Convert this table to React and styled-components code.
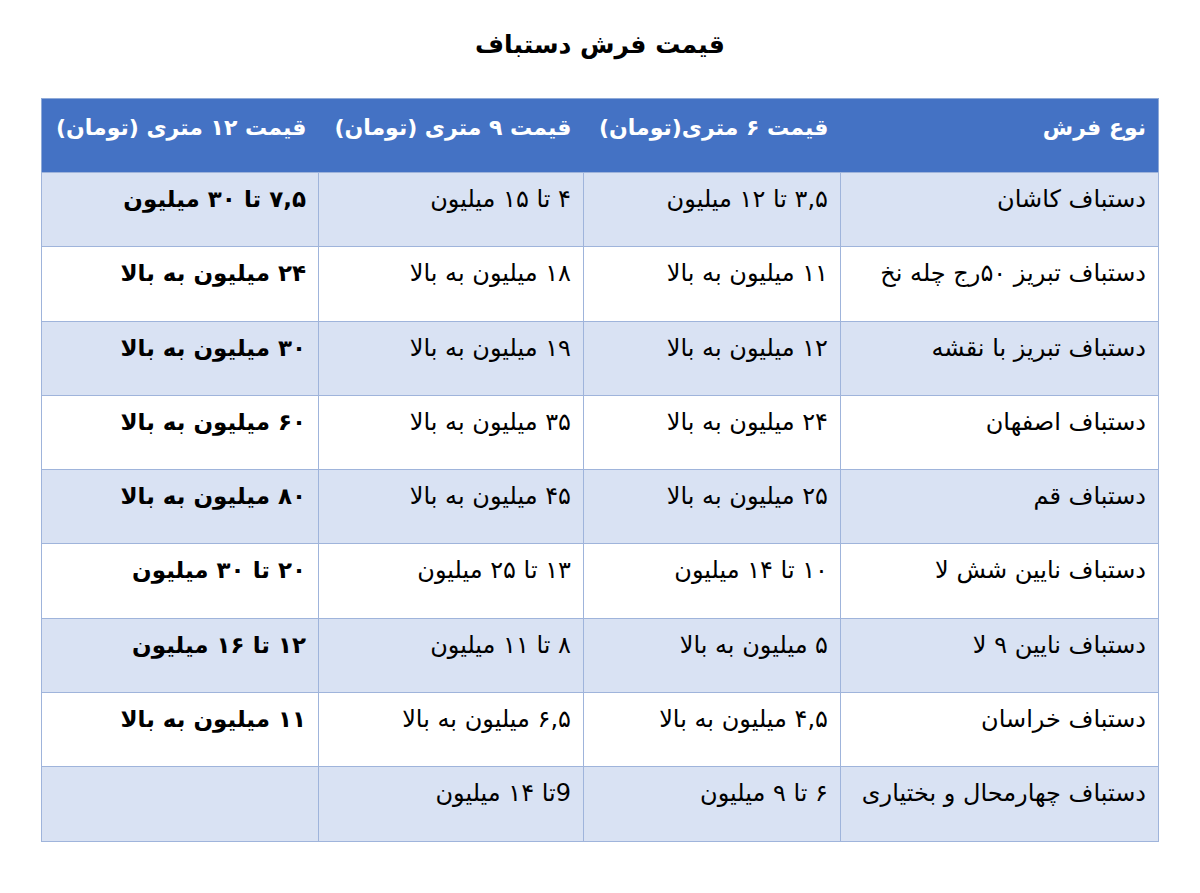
import React from "react";
import styled, { createGlobalStyle } from "styled-components";

const GlobalStyle = createGlobalStyle`
  html, body {
    margin: 0;
    padding: 0;
    background: #ffffff;
  }
  body {
    font-family: "DejaVu Sans", "Noto Sans", sans-serif;
    color: #000;
  }
`;

const Page = styled.div`
  width: 1200px;
  min-height: 893px;
  display: flex;
  flex-direction: column;
  align-items: center;
  padding-top: 28px;
  box-sizing: border-box;
  direction: rtl;
`;

const Title = styled.h1`
  margin: 0 0 36px;
  font-size: 25px;
  font-weight: bold;
  line-height: 34px;
`;

const Table = styled.table`
  width: 1117px;
  table-layout: fixed;
  border-collapse: collapse;
  border: 1px solid #8faad8;
`;

const Col = styled.col`
  width: ${(p) => p.$w}px;
`;

const HeadCell = styled.th`
  height: 74px;
  background: #4472c4;
  color: #ffffff;
  font-size: 22px;
  font-weight: bold;
  line-height: 28px;
  text-align: right;
  vertical-align: top;
  padding: 15px 12px 0;
  box-sizing: border-box;
  white-space: nowrap;
`;

const Row = styled.tr`
  background: ${(p) => (p.$shaded ? "#d9e2f3" : "#ffffff")};
`;

const Cell = styled.td`
  height: 74.3px;
  border: 1.5px solid #9fb4db;
  font-size: ${(p) => (p.$bold ? "23px" : "24px")};
  font-weight: ${(p) => (p.$bold ? "bold" : "normal")};
  line-height: 28px;
  text-align: right;
  vertical-align: top;
  padding: 12px 12px 0;
  box-sizing: border-box;
  white-space: nowrap;
`;

const widths = [318, 257, 265, 277];

const headers = [
  "نوع فرش",
  "قیمت ۶ متری(تومان)",
  "قیمت ۹ متری (تومان)",
  "قیمت ۱۲ متری (تومان)",
];

const rows = [
  ["دستباف کاشان", "۳,۵ تا ۱۲ میلیون", "۴  تا ۱۵ میلیون", "۷,۵ تا ۳۰ میلیون"],
  ["دستباف تبریز ۵۰رج چله نخ", "۱۱  میلیون به بالا", "۱۸ میلیون به بالا", "۲۴ میلیون به بالا"],
  ["دستباف تبریز با نقشه", "۱۲  میلیون به بالا", "۱۹ میلیون به بالا", "۳۰ میلیون به بالا"],
  ["دستباف اصفهان", "۲۴  میلیون به بالا", "۳۵  میلیون به بالا", "۶۰ میلیون به بالا"],
  ["دستباف قم", "۲۵ میلیون به بالا", "۴۵  میلیون به بالا", "۸۰ میلیون به بالا"],
  ["دستباف نایین شش لا", "۱۰ تا ۱۴ میلیون", "۱۳ تا ۲۵ میلیون", "۲۰ تا ۳۰ میلیون"],
  ["دستباف نایین ۹ لا", "۵ میلیون به بالا", "۸ تا ۱۱ میلیون", "۱۲ تا ۱۶ میلیون"],
  ["دستباف خراسان", "۴,۵ میلیون به بالا", "۶,۵ میلیون به بالا", "۱۱ میلیون به بالا"],
  ["دستباف چهارمحال و بختیاری", "۶ تا ۹ میلیون", "9تا ۱۴ میلیون", ""],
];

const App = () => {
  return (
    <>
      <GlobalStyle />
      <Page>
        <Title>قیمت فرش دستباف</Title>
        <Table>
          <colgroup>
            {widths.map((w, i) => (
              <Col key={i} $w={w} />
            ))}
          </colgroup>
          <thead>
            <tr>
              {headers.map((h) => (
                <HeadCell key={h}>{h}</HeadCell>
              ))}
            </tr>
          </thead>
          <tbody>
            {rows.map((r, i) => (
              <Row key={i} $shaded={i % 2 === 0}>
                {r.map((c, j) => (
                  <Cell key={j} $bold={j === 3}>
                    {c}
                  </Cell>
                ))}
              </Row>
            ))}
          </tbody>
        </Table>
      </Page>
    </>
  );
};

export default App;
